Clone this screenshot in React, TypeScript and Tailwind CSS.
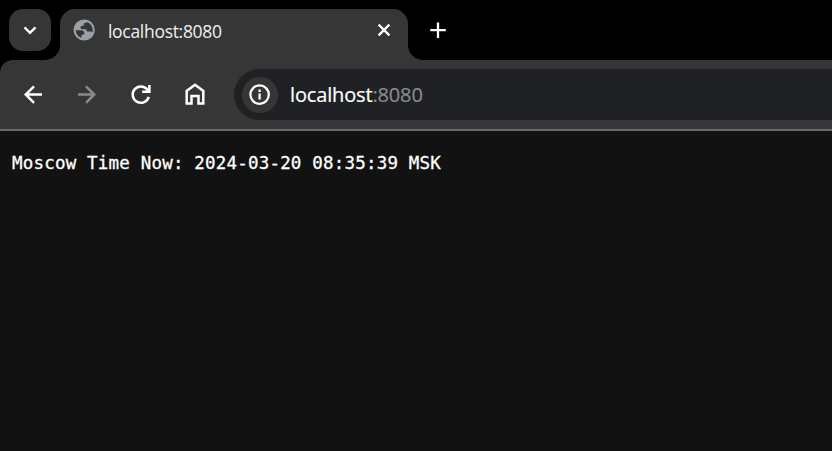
export default function App() {
  return (
    <div className="flex h-[451px] w-[832px] flex-col overflow-hidden bg-[#121212]">
      <header className="flex h-[60px] shrink-0 items-start bg-black pl-[9px] pt-[9px]">
        <button className="flex h-[42px] w-[42px] items-center justify-center rounded-[14px] bg-[#363636]">
          <svg width="42" height="42" viewBox="0 0 42 42" fill="none" stroke="#fff" strokeWidth="2.4">
            <path d="M15.5 18.3 21 23.8l5.500-5.500" />
          </svg>
        </button>
        <div className="relative ml-[9px] flex h-[51px] w-[348px] items-start rounded-t-[15px] bg-[#363636]">
          <svg className="absolute -left-[15px] bottom-0" width="15" height="15" viewBox="0 0 15 15">
            <path d="M15 0v15H0A15 15 0 0 0 15 0z" fill="#363636" />
          </svg>
          <svg className="absolute -right-[15px] bottom-0" width="15" height="15" viewBox="0 0 15 15">
            <path d="M0 0v15h15A15 15 0 0 1 0 0z" fill="#363636" />
          </svg>
          <svg className="ml-[13px] mt-[10px]" width="22" height="22" viewBox="0 0 22 22" fill="none">
            <circle cx="11.200" cy="11" r="10.600" fill="#9aa0a6" />
            <path d="M2.800 11.300h5c2.200 0 3.500 1.200 3.500 3v1.200H9.800c-.8 0-1.300.6-1.300 1.400v2A8.500 8.500 0 0 1 2.800 11.300z" fill="#363636" />
            <path d="M13.800 3c3.500 1.200 5.900 4.300 5.900 8.300 0 .8-.1 1.300-.3 1.900-.7-.6-1.500-.7-2.500-.7h-1.500c-1.500 0-2.200-.8-2.200-2.300H9.500c-1.300 0-2-.6-2-1.600 0-1.200.7-1.900 2-1.900h1.300V5.300c0-.8.5-1.300 1.300-1.300h1.200z" fill="#363636" />
          </svg>
          <span className="ml-[13px] mt-[10px] w-[240px] whitespace-nowrap font-['Open_Sans',sans-serif] text-[17.500px] leading-[24px] tracking-[-0.3px] text-[#f0f0f0]">localhost:8080</span>
          <svg className="ml-[26px] mt-[11px]" width="20" height="20" viewBox="0 0 20 20" stroke="#fff" strokeWidth="2.200">
            <path d="M4.600 4.600l10.800 10.800M15.400 4.600 4.600 15.400" />
          </svg>
        </div>
        <svg className="ml-[18px] mt-[9px]" width="24" height="24" viewBox="0 0 24 24" stroke="#fff" strokeWidth="2.300">
          <path d="M12 4.500v15.500M4.300 12.200h15.500" />
        </svg>
      </header>

      <div className="shrink-0 bg-black">
        <nav className="flex h-[71px] items-start rounded-tl-[13px] border-b-2 border-[#6b6b6b] bg-[#363636] pt-[9px]">
          <svg className="ml-[21px] mt-[14px]" width="24" height="24" viewBox="0 0 24 24" fill="none" stroke="#fff" strokeWidth="2.500">
            <path d="M21 11.500H5M13 3.300 4.700 11.500l8.300 8.300" />
          </svg>
          <svg className="ml-[30px] mt-[14px]" width="24" height="24" viewBox="0 0 24 24" fill="none" stroke="#8a8a8a" strokeWidth="2.500">
            <path d="M3 11.500h16M11 3.300l8.300 8.200-8.300 8.300" />
          </svg>
          <svg className="ml-[30px] mt-[13px]" width="24" height="24" viewBox="0 0 24 24" fill="none" stroke="#fff" strokeWidth="2.500">
            <path d="M19.800 14.800a8.200 8.200 0 1 1-1.500-7.300l2 2M20.400 3v6.700h-7.200" />
          </svg>
          <svg className="ml-[30px] mt-[12px]" width="24" height="26" viewBox="0 0 24 26" fill="none" stroke="#fff" strokeWidth="2.500">
            <path d="M3.700 22.600V10L12 3.800l8.300 6.200v12.600h-4.800v-7.500h-7v7.500z" />
          </svg>
          <div className="ml-[27px] flex h-[51px] flex-1 items-center rounded-l-full bg-[#202124] pl-[8px]">
            <span className="flex h-[36px] w-[36px] items-center justify-center rounded-full bg-[#363636]">
              <svg width="22" height="22" viewBox="0 0 22 22" fill="none" stroke="#fff" strokeWidth="2.300">
                <circle cx="10.600" cy="10.600" r="9.200" />
                <path d="M10.600 9.600v6M10.600 5.600v2.300" />
              </svg>
            </span>
            <span className="ml-[12px] whitespace-nowrap font-['Open_Sans',sans-serif] text-[20px] leading-[28px] tracking-[-0.15px] text-white [-webkit-text-stroke:0.2px]">
              localhost<span className="text-[#8b8c8e]">:8080</span>
            </span>
          </div>
        </nav>
      </div>

      <main className="flex-1 pl-[12px] pt-[20px]">
        <pre className="font-['DejaVu_Sans_Mono',monospace] text-[17.500px] leading-[24px] tracking-[0.190px] text-white [-webkit-text-stroke:0.3px]">Moscow Time Now: 2024-03-20 08:35:39 MSK</pre>
      </main>
    </div>
  );
}
